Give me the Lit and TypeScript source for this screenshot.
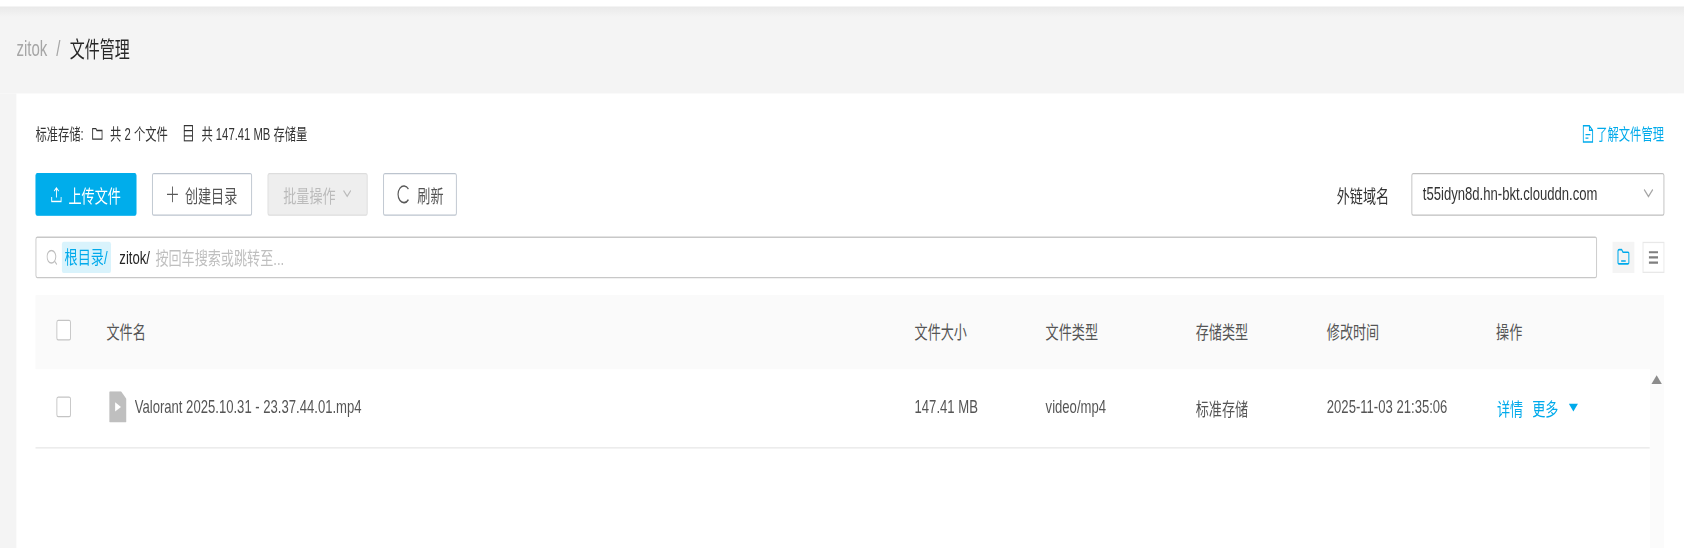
import { LitElement, html, css } from 'lit';
import { customElement } from 'lit/decorators.js';

// the reference is a stretched capture, so the page is laid out at its
// natural size and scaled as a whole
const COLUMNS = '78px 888px 144px 165px 144px 186px 1fr';

@customElement('app-root')
export class AppRoot extends LitElement {
  static override styles = css`
    :host {
      display: block;
      width: 1684px;
      height: 548px;
      overflow: hidden;
      background: #fff;
    }

    .page {
      box-sizing: border-box;
      width: 1850.5px;
      height: 421.5px;
      transform: scale(0.91, 1.3);
      transform-origin: 0 0;
      display: flex;
      flex-direction: column;
      font-family: 'Liberation Sans', 'Noto Sans CJK SC', sans-serif;
      font-size: 14.4px;
      color: #555;
      padding-top: 4.5px;
    }

    .head {
      height: 67px;
      flex: none;
      box-sizing: border-box;
      padding: 0 0 2px 18px;
      display: flex;
      align-items: center;
      gap: 10px;
      font-size: 16.5px;
      background: linear-gradient(#e9e9e9, #f4f4f4 8px);
    }

    .crumb {
      color: #a6a6a6;
    }

    .sep {
      color: #a6a6a6;
    }

    .current {
      color: #262626;
    }

    .card {
      flex: 1;
      margin-left: 18px;
      background: #fff;
      padding: 0 22px 0 21px;
      display: flex;
      flex-direction: column;
      min-height: 0;
      box-shadow: -18px 0 0 #f4f4f4;
    }

    .info {
      height: 62px;
      margin-bottom: -1px;
      flex: none;
      display: flex;
      align-items: center;
      font-size: 12.4px;
      color: #333;
    }

    .info svg {
      margin: 0 8px 0 6px;
    }

    .info .label {
      margin-right: 3px;
    }

    .info .block {
      margin-right: 11px;
    }

    .doc {
      margin-left: auto;
      display: flex;
      align-items: center;
      gap: 3px;
      color: #00aaeb;
    }

    .doc svg {
      margin: 0;
    }

    .tools {
      height: 33px;
      flex: none;
      display: flex;
      align-items: stretch;
      gap: 17px;
    }

    .btn {
      box-sizing: border-box;
      display: flex;
      align-items: center;
      justify-content: center;
      gap: 7px;
      border: 1px solid #bcc4ce;
      border-radius: 2px;
      background: #fff;
      color: #555;
      width: 110px;
    }

    .btn.primary {
      background: #00adeb;
      border-color: #00adeb;
      color: #fff;
      width: 111px;
    }

    .btn.disabled {
      background: #eee;
      border-color: #ddd;
      color: #bbb;
    }

    .btn.short {
      width: 81px;
    }

    .domain {
      margin-left: auto;
      display: flex;
      align-items: center;
      gap: 24px;
      color: #333;
    }

    .select {
      box-sizing: border-box;
      width: 278px;
      height: 100%;
      border: 1px solid #bfbfbf;
      border-radius: 2px;
      display: flex;
      align-items: center;
      justify-content: space-between;
      padding: 0 10px 0 12px;
    }

    .search-row {
      margin-top: 16px;
      height: 32px;
      flex: none;
      display: flex;
      align-items: center;
    }

    .search {
      box-sizing: border-box;
      flex: 1;
      height: 100%;
      border: 1px solid #c8c8c8;
      border-radius: 2px;
      display: flex;
      align-items: center;
      padding: 0 0 0 11px;
    }

    .root-tag {
      background: #d9f3fc;
      color: #00aaeb;
      border-radius: 2px;
      padding: 2px 4px 2px 3px;
      line-height: 20px;
      margin-left: 5px;
    }

    .path {
      color: #262626;
      margin: 0 6px 0 9px;
    }

    .hint {
      color: #bfbfbf;
    }

    .view {
      box-sizing: border-box;
      width: 24px;
      height: 24px;
      display: flex;
      align-items: center;
      justify-content: center;
      margin-left: 9px;
    }

    .view.first {
      margin-left: 17px;
      background: #f4f4f4;
    }

    .view.second {
      border: 1px solid #e8e8e8;
    }

    .table-head,
    .row {
      display: grid;
      align-items: center;
    }

    .table-head {
      margin-top: 13px;
      height: 57.5px;
      flex: none;
      box-sizing: border-box;
      padding-bottom: 2px;
      background: #fafafa;
    }

    .body {
      flex: 1;
      display: flex;
      min-height: 0;
    }

    .rows {
      flex: 1;
    }

    .row {
      box-sizing: border-box;
      height: 60.5px;
      padding-bottom: 1px;
      border-bottom: 1px solid #e8e8e8;
    }

    .scroll {
      width: 16px;
      flex: none;
      background: #fbfbfb;
      display: flex;
      justify-content: center;
      padding-top: 4px;
      box-sizing: border-box;
    }

    .check-cell {
      padding-left: 23px;
      display: flex;
    }

    .check {
      box-sizing: border-box;
      width: 16px;
      height: 16px;
      border: 1px solid #c4c4c4;
      border-radius: 2px;
      background: #fff;
    }

    .name {
      display: flex;
      align-items: center;
      gap: 9px;
      margin-left: 3px;
    }

    .ops {
      display: flex;
      align-items: center;
      color: #00aaeb;
      gap: 10px;
      padding-left: 1px;
    }
  `;

  private _chevron(color: string, size = 11) {
    return html`<svg width=${size} height=${size * 0.73} viewBox="0 0 11 8" fill="none" stroke=${color} stroke-width="1.1"><path d="M1.5 1.5 5.5 6 9.5 1.5" /></svg>`;
  }

  override render() {
    return html`
      <div class="page">
        <div class="head">
          <span class="crumb">zitok</span>
          <span class="sep">/</span>
          <span class="current">文件管理</span>
        </div>
        <div class="card">
          <div class="info">
            <span class="label">标准存储:</span>
            <svg width="12" height="12" viewBox="0 0 12 12" fill="none" stroke="#333"><path d="M.8 2h3.600l1 1.400h5.800v6.600H.8z" /></svg>
            <span class="block">共 2 个文件</span>
            <svg width="12" height="13" viewBox="0 0 12 13" fill="none" stroke="#333"><path d="M1.500.7h9v11.600h-9zM1.500 4.500h9M1.500 8.500h9" /></svg>
            <span>共 147.41 MB 存储量</span>
            <span class="doc">
              <svg width="12" height="14" viewBox="0 0 11 13" fill="none" stroke="#00aaeb"><path d="M.7.7h6.300l3.300 3.200v8.400H.7zM7 .7v3.200h3.300M3 7h5M3 9.500h3" /></svg>
              了解文件管理
            </span>
          </div>
          <div class="tools">
            <div class="btn primary">
              <svg width="12" height="13" viewBox="0 0 12 13" fill="none" stroke="#fff"><path d="M.8 8.500v3.500h10.400V8.500M6 9V1.500M3.500 4 6 1.500 8.500 4" /></svg>
              上传文件
            </div>
            <div class="btn">
              <svg width="13" height="13" viewBox="0 0 13 13" fill="none" stroke="#595959"><path d="M6.500.5v12M.5 6.500h12" /></svg>
              创建目录
            </div>
            <div class="btn disabled">批量操作 ${this._chevron('#bbb')}</div>
            <div class="btn short">
              <svg width="16" height="15" viewBox="0 0 14 14" fill="none" stroke="#595959" stroke-width="1.200"><path d="M11.500 3.200A6 6 0 1 0 11.500 10.800" /></svg>
              刷新
            </div>
            <div class="domain">
              <span>外链域名</span>
              <div class="select">
                <span>t55idyn8d.hn-bkt.clouddn.com</span>
                ${this._chevron('#a6a6a6', 13)}
              </div>
            </div>
          </div>
          <div class="search-row">
            <div class="search">
              <svg width="12" height="12" viewBox="0 0 12 12" fill="none" stroke="#bfbfbf" stroke-width="1.100"><circle cx="5.500" cy="5.500" r="4.800" /><path d="M9 9l2.500 2.500" /></svg>
              <span class="root-tag">根目录/</span>
              <span class="path">zitok/</span>
              <span class="hint">按回车搜索或跳转至...</span>
            </div>
            <div class="view first">
              <svg width="14" height="13" viewBox="0 0 14 13" fill="none" stroke="#00aaeb" stroke-width="1.200"><path d="M1 2.200A1.200 1.200 0 0 1 2.200 1H5l1.500 2H12a1 1 0 0 1 1 1v7a1 1 0 0 1-1 1H2a1 1 0 0 1-1-1zM4.500 9.800h5" /></svg>
            </div>
            <div class="view second">
              <svg width="12" height="12" viewBox="0 0 12 12" fill="none" stroke="#7f7f7f" stroke-width="1.600"><path d="M1 2h10M1 6h10M1 10h10" /></svg>
            </div>
          </div>
          <div class="table-head" style="grid-template-columns:${COLUMNS}">
            <div class="check-cell"><div class="check"></div></div>
            <div>文件名</div>
            <div>文件大小</div>
            <div>文件类型</div>
            <div>存储类型</div>
            <div>修改时间</div>
            <div>操作</div>
          </div>
          <div class="body">
            <div class="rows">
              <div class="row" style="grid-template-columns:${COLUMNS}">
                <div class="check-cell"><div class="check"></div></div>
                <div class="name">
                  <svg width="19" height="24" viewBox="0 0 19 24"><path d="M1 0h12l6 6v17a1 1 0 0 1-1 1H1a1 1 0 0 1-1-1V1a1 1 0 0 1 1-1z" fill="#bfbfbf" /><path d="M6.500 8.500 13 12l-6.500 3.500z" fill="#fff" /></svg>
                  <span>Valorant 2025.10.31 - 23.37.44.01.mp4</span>
                </div>
                <div>147.41 MB</div>
                <div>video/mp4</div>
                <div>标准存储</div>
                <div>2025-11-03 21:35:06</div>
                <div class="ops">
                  <span>详情</span>
                  <span>更多</span>
                  <svg width="12" height="7" viewBox="0 0 11 7"><path d="M.5.5h10L5.500 6.500z" fill="#00aaeb" /></svg>
                </div>
              </div>
            </div>
            <div class="scroll">
              <svg width="13" height="8" viewBox="0 0 11 7"><path d="M5.500.5 10.500 6.500H.5z" fill="#8c8c8c" /></svg>
            </div>
          </div>
        </div>
      </div>
    `;
  }
}

declare global {
  interface HTMLElementTagNameMap {
    'app-root': AppRoot;
  }
}
